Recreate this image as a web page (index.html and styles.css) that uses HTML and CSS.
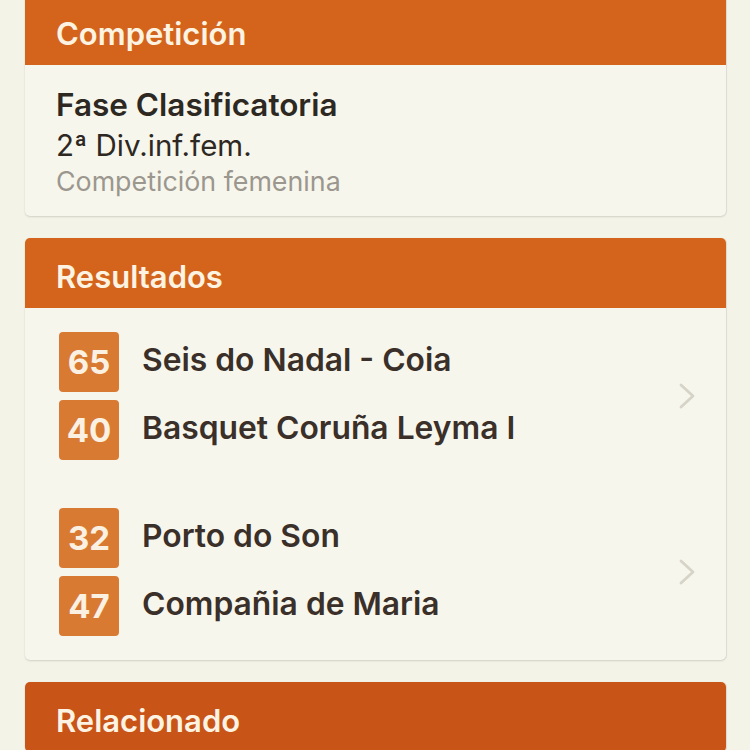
FILE: index.html
```html
<!DOCTYPE html>
<html lang="es">
<head>
    <meta charset="UTF-8">
    <meta name="viewport" content="width=device-width, initial-scale=1.0">
    <title>Competición</title>
    <link rel="stylesheet" href="styles.css">
</head>
<body>
    <div class="page">
        <div class="card">
            <div class="card-head">Competición</div>
            <div class="card-body info">
                <div class="info-title">Fase Clasificatoria</div>
                <div class="info-sub">2ª Div.inf.fem.</div>
                <div class="info-note">Competición femenina</div>
            </div>
        </div>

        <div class="card">
            <div class="card-head">Resultados</div>
            <div class="card-body results">
                <div class="match">
                    <div class="teams">
                        <div class="team"><span class="score">65</span><span class="name">Seis do Nadal - Coia</span></div>
                        <div class="team"><span class="score">40</span><span class="name">Basquet Coruña Leyma I</span></div>
                    </div>
                    <svg class="chevron" width="16" height="26" viewBox="0 0 16 26">
                        <path d="M2 2 L14 13 L2 24" fill="none" stroke="#d6d4c9" stroke-width="2.8" stroke-linecap="round" stroke-linejoin="round"/>
                    </svg>
                </div>
                <div class="match">
                    <div class="teams">
                        <div class="team"><span class="score">32</span><span class="name">Porto do Son</span></div>
                        <div class="team"><span class="score">47</span><span class="name">Compañia de Maria</span></div>
                    </div>
                    <svg class="chevron" width="16" height="26" viewBox="0 0 16 26">
                        <path d="M2 2 L14 13 L2 24" fill="none" stroke="#d6d4c9" stroke-width="2.8" stroke-linecap="round" stroke-linejoin="round"/>
                    </svg>
                </div>
            </div>
        </div>

        <div class="card">
            <div class="card-head dark">Relacionado</div>
            <div class="card-body"></div>
        </div>
    </div>
</body>
</html>
```
FILE: styles.css
```css
body {
    margin: 0;
    background-color: #f4f3e8;
    font-family: Inter, "Noto Sans", sans-serif;
    color: #352d27;
}

.page {
    margin-top: -5px;
    padding: 0 24px 0 25px;
}

.card {
    background-color: #f7f6ec;
    border-radius: 5px;
    box-shadow: 0 1px 2px rgba(0, 0, 0, 0.14), 1px 0 1px rgba(0, 0, 0, 0.06);
    margin-bottom: 22px;
    overflow: hidden;
}

.card-head {
    height: 70px;
    box-sizing: border-box;
    padding: 6px 0 0 31px;
    display: flex;
    align-items: center;
    background-color: #d4641b;
    color: #fcf3e2;
    font-size: 31px;
    font-weight: 600;
}

.card-head.dark {
    background-color: #c95418;
}

/* bloque competicion */
.info {
    padding: 20px 31px 19px;
}

.info-title {
    font-size: 31.5px;
    font-weight: 600;
    line-height: 40px;
    color: #2e2823;
}

.info-sub {
    font-size: 29.5px;
    line-height: 40px;
    color: #2e2823;
}

.info-note {
    font-size: 26.8px;
    line-height: 32px;
    color: #9b978f;
}

/* resultados */
.results {
    padding: 24px 31px 24px 34px;
    display: flex;
    flex-direction: column;
    gap: 48px;
}

.match {
    display: flex;
    align-items: center;
    justify-content: space-between;
}

.teams {
    display: flex;
    flex-direction: column;
    gap: 8px;
}

.team {
    display: flex;
    align-items: center;
    gap: 23px;
}

.score {
    width: 60px;
    height: 60px;
    border-radius: 4px;
    background-color: #d97a33;
    color: #fbf1e2;
    font-size: 33px;
    font-weight: 700;
    display: flex;
    align-items: center;
    justify-content: center;
}

.name {
    font-size: 31.8px;
    font-weight: 600;
    color: #3a3029;
    margin-top: -6px;
}

.chevron {
    flex: none;
}
```
